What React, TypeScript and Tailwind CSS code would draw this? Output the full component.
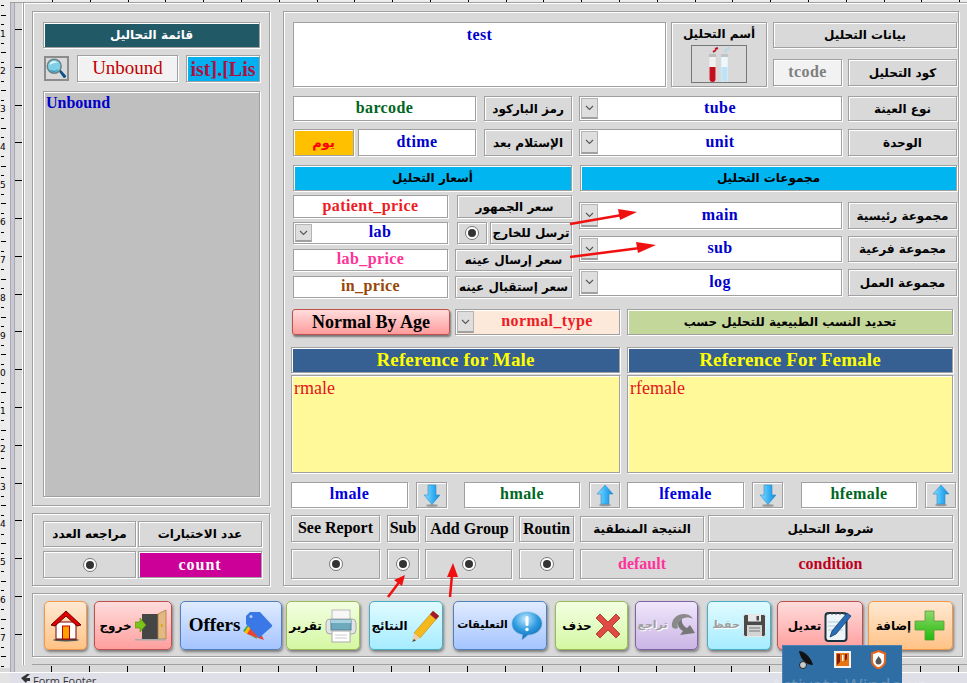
import type { ReactNode } from 'react';

const etched = 'border border-[#a0a0a0] shadow-[inset_1px_1px_0_#fff,1px_1px_0_#fff]';
const serif = "font-['Liberation_Serif',serif]";
const arabic = "font-['DejaVu_Sans',sans-serif]";
const greyed = 'text-[#a0a0a0] text-[11px] [text-shadow:1px_1px_0_#fff]';

function Label({ className = '', children }: { className?: string; children: ReactNode }) {
  return (
    <div dir="rtl" className={`${etched} ${arabic} shrink-0 flex items-center justify-center font-bold text-[12px] text-black whitespace-nowrap overflow-hidden ${className}`}>
      {children}
    </div>
  );
}

function Latin({ className = '', children }: { className?: string; children: ReactNode }) {
  return (
    <div className={`${etched} ${serif} shrink-0 flex items-center justify-center pb-px font-bold text-[16px] whitespace-nowrap overflow-hidden ${className}`}>
      {children}
    </div>
  );
}

function Field({ className = '', children }: { className?: string; children: ReactNode }) {
  return (
    <div className={`${etched} ${serif} shrink-0 flex items-center justify-center pb-[2px] bg-white font-bold text-[16px] tracking-[0.4px] whitespace-nowrap overflow-hidden ${className}`}>
      {children}
    </div>
  );
}

function Combo({ className = '', bg = 'bg-white', children }: { className?: string; bg?: string; children: ReactNode }) {
  return (
    <div className={`${etched} ${serif} ${bg} shrink-0 flex items-stretch font-bold text-[16px] tracking-[0.4px] whitespace-nowrap ${className}`}>
      <div className="w-[17px] m-[1px] shrink-0 bg-[#dedede] border border-[#b4b4b4] border-b-2 border-b-[#a0a0a0] flex items-center justify-center">
        <svg width="9" height="6" viewBox="0 0 9 6"><path d="M1 1l3.5 3.5L8 1" fill="none" stroke="#555" strokeWidth="1.1" /></svg>
      </div>
      <div className="flex-1 flex items-center justify-center pb-[2px]">{children}</div>
    </div>
  );
}

function Radio() {
  return (
    <div className="w-[14px] h-[14px] rounded-full bg-white border border-[#777] flex items-center justify-center">
      <div className="w-[8px] h-[8px] rounded-full bg-[#333]" />
    </div>
  );
}

function RadioCell({ className = '' }: { className?: string }) {
  return (
    <div className={`${etched} shrink-0 flex items-center justify-center ${className}`}>
      <Radio />
    </div>
  );
}

function ActionButton({ className, icon, children }: { className: string; icon?: ReactNode; children?: ReactNode }) {
  return (
    <div className={`shrink-0 h-[49px] rounded-[5px] border bg-linear-to-b shadow-[1px_2px_3px_rgba(0,0,0,0.45)] flex items-center justify-center gap-[3px] ${className}`}>
      {children}
      {icon}
    </div>
  );
}

function BlockArrow({ up = false }: { up?: boolean }) {
  return (
    <svg width="18" height="23" viewBox="0 0 18 23">
      <defs>
        <linearGradient id={up ? 'arrUp' : 'arrDown'} x1="0" x2="1" y1="0" y2="0">
          <stop offset="0" stopColor="#8fdcff" />
          <stop offset="0.55" stopColor="#37b2f5" />
          <stop offset="1" stopColor="#1b86d8" />
        </linearGradient>
      </defs>
      <ellipse cx="9" cy={up ? 21 : 21.5} rx="6" ry="1.3" fill="#999" />
      <path
        d={up ? 'M9 1L17 10H13V20H5V10H1Z' : 'M5 1H13V11H17L9 20.5L1 11H5Z'}
        fill={`url(#${up ? 'arrUp' : 'arrDown'})`}
        stroke="#2d8fcf"
        strokeWidth="0.6"
      />
    </svg>
  );
}

function ArrowCell({ up = false }: { up?: boolean }) {
  return (
    <div className={`${etched} w-[31px] h-[26px] shrink-0 flex items-center justify-center`}>
      <BlockArrow up={up} />
    </div>
  );
}

const Magnifier = () => (
  <svg width="23" height="23" viewBox="0 0 23 23">
    <path d="M14 14.5l2-1.5 6 6.5c.6 1-1.4 3-2.6 2.4z" fill="#0b4f8c" />
    <circle cx="9" cy="9" r="7.6" fill="#7fd0e6" stroke="#6a7f88" strokeWidth="1.6" />
    <path d="M4 8a5 5 0 0 1 5-4.5c2 0 3 1 3.6 2C10 4.6 6 5.5 4 8z" fill="#e9fbff" />
    <path d="M4 12c2 2 6 3 9.500 0-1 2.500-3.500 3.500-5 3.300-2-.2-3.800-1.500-4.500-3.300z" fill="#2a98bd" />
  </svg>
);

const Tubes = () => (
  <svg width="30" height="37" viewBox="0 0 30 37">
    <rect x="5" y="8" width="7" height="28" rx="2.5" fill="#f1f1f1" stroke="#d0d0d0" strokeWidth="0.5" />
    <rect x="5" y="8" width="7" height="3" fill="#bdbdbd" />
    <path d="M5.500 21H11.500V33a3 3 0 0 1-6 0z" fill="#c50f1f" />
    <rect x="17" y="8" width="7" height="28" rx="2.5" fill="#eef7fc" stroke="#d0dfe8" strokeWidth="0.5" />
    <rect x="17" y="8" width="7" height="3" fill="#c2c2c2" />
    <path d="M17.500 21H23.500V33a3 3 0 0 1-6 0z" fill="#bfe3f6" />
    <path d="M9 6l3-2M11 3l3-1" stroke="#c50f1f" strokeWidth="2" />
    <path d="M21 6l2-3M24 3l1-2" stroke="#a9d8ee" strokeWidth="2" />
  </svg>
);

const HomeIcon = () => (
  <svg width="32" height="34" viewBox="0 0 32 34">
    <ellipse cx="16" cy="31" rx="13" ry="1.500" fill="#555" />
    <rect x="6" y="13" width="20" height="17" fill="#fff" stroke="#7a0000" />
    <rect x="12.500" y="17" width="7" height="13" fill="#ffa200" stroke="#c00000" />
    <path d="M1 16L16 2L31 16L27 17L16 7L5 17Z" fill="#e30000" stroke="#600" strokeWidth="1" />
  </svg>
);

const ExitIcon = () => (
  <svg width="32" height="34" viewBox="0 0 32 34">
    <rect x="7" y="5" width="16" height="25" fill="#454545" />
    <path d="M23 5l8-4v29h-8z" fill="#e3b883" stroke="#a97b45" strokeWidth="0.8" />
    <rect x="26" y="15" width="1.500" height="3" fill="#d9a400" />
    <rect x="0" y="30" width="31" height="1.500" fill="#aaa" />
    <path d="M0 13h5V9l6 7-6 7v-4H0z" fill="#7cc41a" stroke="#4f8f07" strokeWidth="0.6" />
  </svg>
);

const TagIcon = () => (
  <svg width="30" height="31" viewBox="0 0 30 31">
    <path d="M0 21l8-11 6 19z" fill="#34a853" />
    <path d="M1 22l9-12 8 20z" fill="#fbbc05" transform="rotate(-4 9 20)" />
    <path d="M4 24l8-13 9 19z" fill="#ea4335" />
    <path d="M7 2h10l12 13c.5 1 0 1.500-.5 2L16 28 3 14V6z" fill="#3b78e7" />
    <circle cx="8" cy="6.500" r="1.500" fill="#b7d0f8" />
  </svg>
);

const PrinterIcon = () => (
  <svg width="32" height="34" viewBox="0 0 32 34">
    <rect x="7" y="1" width="18" height="11" fill="#f7f7f7" stroke="#bbb" />
    <rect x="1" y="10" width="30" height="15" rx="4" fill="#e4e4e4" stroke="#aaa" />
    <rect x="6" y="11" width="20" height="10" fill="#6ea9bd" stroke="#4f8497" />
    <rect x="6" y="11" width="20" height="3" fill="#a6d3df" />
    <rect x="7" y="22" width="18" height="11" fill="#fff" stroke="#aaa" />
    <path d="M10 26h12M10 29h12" stroke="#ccc" />
  </svg>
);

const PencilIcon = () => (
  <svg width="30" height="34" viewBox="0 0 30 34">
    <path d="M22 2l6 5L9 29 3 24z" fill="#f6b91d" stroke="#b9860b" strokeWidth="0.6" />
    <path d="M22 2l6 5-3 3.500-6-5z" fill="#9e1b2c" />
    <path d="M3 24l6 5-8 4z" fill="#edcfa8" />
    <path d="M1 33l2-3 2 1.500z" fill="#444" />
  </svg>
);

const ChatIcon = () => (
  <svg width="32" height="30" viewBox="0 0 32 30">
    <defs>
      <radialGradient id="chatFill" cx="0.45" cy="0.25" r="0.8">
        <stop offset="0" stopColor="#bfe8ff" />
        <stop offset="0.5" stopColor="#2e9be0" />
        <stop offset="1" stopColor="#0c5fa8" />
      </radialGradient>
    </defs>
    <path d="M16 1c8.500 0 15 5 15 11.500S24.500 24 17 24l-6 5 .5-5.500C5 22.500 1 18 1 12.500 1 6 7.500 1 16 1z" fill="url(#chatFill)" stroke="#7ab7de" strokeWidth="0.6" />
    <rect x="14.500" y="5" width="3" height="10" rx="1.500" fill="#fff" />
    <circle cx="16" cy="18.500" r="1.700" fill="#fff" />
  </svg>
);

const CrossIcon = () => (
  <svg width="26" height="26" viewBox="0 0 26 26">
    <path d="M5 1l8 8 8-8 4 4-8 8 8 8-4 4-8-8-8 8-4-4 8-8-8-8z" fill="#df4b42" stroke="#a02c27" strokeWidth="0.8" />
  </svg>
);

const UndoIcon = () => (
  <svg width="25" height="25" viewBox="0 0 25 25">
    <path d="M24 20L9 22l3-4C9 16.500 7 14 7 11c0-2 1-4 4-5-1 5 3 8 5 9l3-3z" fill="#777" />
    <path d="M1 14C0 7 5 1 13 1c5 0 8 3 9 5-3-2-8-2-11 0-4 2-5 5-4 9-2 1-4 1-6-1z" fill="#8a8a8a" />
  </svg>
);

const SaveIcon = () => (
  <svg width="23" height="23" viewBox="0 0 23 23">
    <rect x="0.500" y="0.500" width="22" height="22" rx="2" fill="#4a4a4a" stroke="#e6e6e6" />
    <rect x="5" y="1" width="13" height="6.500" fill="#e8e8e8" />
    <rect x="13.500" y="2" width="2.500" height="4.500" fill="#4a4a4a" />
    <rect x="4" y="11" width="15" height="11" fill="#d4d4d4" />
    <path d="M6 14h11M6 17h11" stroke="#777" />
  </svg>
);

const NotepadIcon = () => (
  <svg width="28" height="32" viewBox="0 0 28 32">
    <rect x="1.500" y="3" width="21" height="28" rx="3" fill="#eef5f9" stroke="#18313f" strokeWidth="2" />
    <path d="M4 2v3M8 2v3M12 2v3M16 2v3M20 2v3" stroke="#555" />
    <path d="M4 12h15M4 16h15M4 20h15" stroke="#b5cbd6" />
    <path d="M23 3l4 3L12 24l-6 3 2-6z" fill="#2a6cb5" stroke="#123e6f" strokeWidth="0.8" />
  </svg>
);

const PlusIcon = () => (
  <svg width="31" height="31" viewBox="0 0 31 31">
    <defs>
      <linearGradient id="plusFill" x1="0" x2="0" y1="0" y2="1">
        <stop offset="0" stopColor="#8fd76b" />
        <stop offset="1" stopColor="#22bb0c" />
      </linearGradient>
    </defs>
    <path d="M11 1h9v10h10v9H20v10h-9V20H1v-9h10z" fill="url(#plusFill)" stroke="#5a9a3f" strokeWidth="0.8" />
  </svg>
);

function TopTicks({ className }: { className: string }) {
  return (
    <div className={`flex pl-[28px] ${className}`}>
      {Array.from({ length: 25 }).map((_, i) => (
        <div key={i} className="w-[37.8px] shrink-0 border-l border-l-black" />
      ))}
    </div>
  );
}

function VerticalRuler() {
  return (
    <div className="w-[10px] h-[669px] bg-[#ececec] pt-[2px] overflow-hidden shrink-0 -mt-[4px]">
      {Array.from({ length: 71 }).map((_, i) => (
        <div key={i} className="h-[9.450px] flex items-center">
          {i % 4 === 3 ? (
            <span className="font-['DejaVu_Sans',sans-serif] text-[9px] leading-none text-black">{((i + 1) / 4) % 10}</span>
          ) : (
            <div className={`h-px bg-black ml-px ${i % 4 === 1 ? 'w-[5px]' : 'w-[3px]'}`} />
          )}
        </div>
      ))}
    </div>
  );
}

export default function App() {
  return (
    <div className="relative w-[967px] h-[683px] overflow-hidden bg-[#d9d9d9]">
      {/* top ruler */}
      <div className="h-[3px] bg-[#ececec] border-b border-[#a0a0a0]">
        <TopTicks className="h-[2px] ml-[24px]" />
      </div>

      <div className="flex h-[669px]">
        {/* left ruler */}
        <div className="w-[23px] shrink-0 flex">
          <VerticalRuler />
          <div className="w-[5px] shrink-0 bg-[#c9c9d6] border-x border-x-[#a8a8b0]" />
          <div className="flex-1 flex flex-col pt-[26px] gap-[36.800px]">
            {Array.from({ length: 17 }).map((_, i) => (
              <div key={i} className="h-px bg-black" />
            ))}
          </div>
        </div>

        <div className="flex-1 min-w-0 flex flex-col">
          <div className="flex-1 border-l border-[#a0a0a0] shadow-[-1px_0_0_#fff,inset_1px_1px_0_#fff] pt-[8px] pl-[8px]">
            <div className="flex gap-[13px] h-[575px]">
              {/* left column */}
              <div className="w-[238px] shrink-0 flex flex-col gap-[7px]">
                <div className={`${etched} h-[495px] pl-[10px] pt-[10px]`}>
                  <div className={`${etched} ${arabic} w-[217px] h-[26px] bg-[#215967] text-white font-bold text-[12px] flex items-center justify-center`} dir="rtl">
                    قائمة التحاليل
                  </div>
                  <div className="flex gap-[8px] mt-[7px] h-[27px] w-[217px]">
                    <div className="w-[25px] h-[25px] ml-px mt-px shrink-0 border-2 border-[#8c8c8c] flex items-center justify-center overflow-hidden">
                      <Magnifier />
                    </div>
                    <div className={`${etched} ${serif} w-[101px] shrink-0 bg-[#f2f2f2] text-[#c00000] text-[19px] flex items-center justify-center`}>Unbound</div>
                    <div className={`${etched} ${serif} w-[74px] shrink-0 bg-[#00b0f0] text-[#b01040] font-bold text-[20px] flex items-center justify-center overflow-hidden whitespace-nowrap`}>ist].[Lis</div>
                  </div>
                  <div className={`${etched} ${serif} mt-[9px] w-[217px] h-[406px] bg-[#bfbfbf] text-[#0000cc] font-bold text-[16px] leading-none pl-[2px] pt-[3px]`}>
                    Unbound
                  </div>
                </div>
                <div className={`${etched} h-[73px] pl-[10px] pt-[7px]`}>
                  <div className="flex gap-[2px] h-[26px]">
                    <Label className="w-[93px]">مراجعه العدد</Label>
                    <Label className="w-[124px]">عدد الاختبارات</Label>
                  </div>
                  <div className="flex gap-[2px] h-[27px] mt-[4px]">
                    <RadioCell className="w-[93px]" />
                    <div className={`${etched} ${serif} w-[124px] bg-[#cc0099] text-white font-bold text-[16px] tracking-[1px] flex items-center justify-center`}>count</div>
                  </div>
                </div>
              </div>

              {/* main panel */}
              <div className={`${etched} w-[676px] shrink-0 pl-[7px] pt-[10px]`}>
                <div className="ml-[2px]">
                  <div className="flex h-[65px]">
                    <Field className="w-[373px] h-[65px] !items-start text-[#0000cc]">test</Field>
                    <div className={`${etched} ml-[5px] w-[96px] shrink-0 flex flex-col items-center pt-[2px]`}>
                      <div dir="rtl" className={`${arabic} font-bold text-[12px] leading-[18px] text-black`}>أسم التحليل</div>
                      <div className="mt-[2px] w-[56px] h-[38px] border border-[#777] flex items-center justify-center overflow-hidden">
                        <Tubes />
                      </div>
                    </div>
                    <div className="ml-[6px] w-[184px] shrink-0 flex flex-col">
                      <Label className="h-[26px] w-[184px]">بيانات التحليل</Label>
                      <div className="flex gap-[6px] mt-[11px] h-[27px]">
                        <Field className="w-[69px] !bg-[#f2f2f2] text-[#7f7f7f]">tcode</Field>
                        <Label className="w-[109px]">كود التحليل</Label>
                      </div>
                    </div>
                  </div>

                  <div className="flex h-[25px] mt-[9px]">
                    <Field className="w-[183px] text-[#006622]">barcode</Field>
                    <Label className="ml-[8px] w-[88px]">رمز الباركود</Label>
                    <Combo className="ml-[7px] w-[263px] text-[#0000cc]">tube</Combo>
                    <Label className="ml-[6px] w-[109px]">نوع العينة</Label>
                  </div>

                  <div className="flex h-[27px] mt-[8px]">
                    <div dir="rtl" className={`${etched} ${arabic} w-[61px] shrink-0 bg-[#ffc000] text-[#ff0000] font-bold text-[13px] flex items-center justify-center`}>يوم</div>
                    <Field className="ml-[4px] w-[118px] text-[#0000cc]">dtime</Field>
                    <Label className="ml-[8px] w-[88px]">الإستلام بعد</Label>
                    <Combo className="ml-[7px] w-[263px] text-[#0000cc]">unit</Combo>
                    <Label className="ml-[6px] w-[109px]">الوحدة</Label>
                  </div>

                  <div className="flex h-[26px] mt-[9px]">
                    <Label className="w-[279px] !bg-[#00b5f0]">أسعار التحليل</Label>
                    <Label className="ml-[8px] w-[377px] !bg-[#00b5f0]">مجموعات التحليل</Label>
                  </div>

                  <div className="flex mt-[4px] h-[103px]">
                    <div className="w-[279px] shrink-0 flex flex-col">
                      <div className="flex h-[23px]">
                        <Field className="w-[155px] text-[#ee1c25]">patient_price</Field>
                        <Label className="ml-[9px] w-[115px]">سعر الجمهور</Label>
                      </div>
                      <div className="flex h-[22px] mt-[4px]">
                        <Combo className="w-[155px] text-[#0000cc]">lab</Combo>
                        <RadioCell className="ml-[9px] w-[30px]" />
                        <Label className="ml-[3px] w-[82px]">ترسل للخارج</Label>
                      </div>
                      <div className="flex h-[22px] mt-[5px]">
                        <Field className="w-[155px] text-[#ff3399]">lab_price</Field>
                        <Label className="ml-[7px] w-[117px]">سعر إرسال عينه</Label>
                      </div>
                      <div className="flex h-[22px] mt-[5px]">
                        <Field className="w-[155px] text-[#974706]">in_price</Field>
                        <Label className="ml-[7px] w-[117px]">سعر إستقبال عينه</Label>
                      </div>
                    </div>
                    <div className="ml-[7px] w-[378px] shrink-0 flex flex-col pt-[7px]">
                      <div className="flex h-[27px]">
                        <Combo className="w-[263px] text-[#0000cc]">main</Combo>
                        <Label className="ml-[6px] w-[109px]">مجموعة رئيسية</Label>
                      </div>
                      <div className="flex h-[26px] mt-[7px]">
                        <Combo className="w-[263px] text-[#0000cc]">sub</Combo>
                        <Label className="ml-[6px] w-[109px]">مجموعة فرعية</Label>
                      </div>
                      <div className="flex h-[27px] mt-[7px]">
                        <Combo className="w-[263px] text-[#0000cc]">log</Combo>
                        <Label className="ml-[6px] w-[109px]">مجموعة العمل</Label>
                      </div>
                    </div>
                  </div>
                </div>

                <div className="flex h-[26px] mt-[11px] ml-px">
                  <div className={`${serif} w-[158px] shrink-0 rounded-[3px] border border-[#c0504d] bg-linear-to-b from-[#ffdcdc] to-[#ff9c9c] shadow-[1px_2px_2px_rgba(0,0,0,0.45)] text-black font-bold text-[18px] flex items-center justify-center`}>Normal By Age</div>
                  <Combo bg="bg-[#fde9d9]" className="ml-[5px] w-[165px] text-[#ee1c25]">normal_type</Combo>
                  <Label className="ml-[7px] w-[326px] !bg-[#c4d79b]">تحديد النسب الطبيعية للتحليل حسب</Label>
                </div>

                <div className="flex gap-[7px] mt-[12px]">
                  <div className="w-[329px] shrink-0 flex flex-col gap-[2px]">
                    <div className={`${etched} ${serif} h-[26px] bg-[#366092] text-[#ffff00] font-bold text-[19px] tracking-[0.15px] flex items-center justify-center`}>Reference for Male</div>
                    <div className={`${etched} ${serif} h-[98px] bg-[#fff999] text-[#e0141c] text-[18px] leading-none pl-[2px] pt-[3px]`}>rmale</div>
                  </div>
                  <div className="w-[326px] shrink-0 flex flex-col gap-[2px]">
                    <div className={`${etched} ${serif} h-[26px] bg-[#366092] text-[#ffff00] font-bold text-[19px] tracking-[0.15px] flex items-center justify-center`}>Reference For Female</div>
                    <div className={`${etched} ${serif} h-[98px] bg-[#fff999] text-[#e0141c] text-[18px] leading-none pl-[2px] pt-[3px]`}>rfemale</div>
                  </div>
                </div>

                <div className="flex h-[26px] mt-[9px]">
                  <Field className="w-[117px] text-[#0000e0]">lmale</Field>
                  <div className="ml-[8px]"><ArrowCell /></div>
                  <Field className="ml-[17px] w-[116px] text-[#006622]">hmale</Field>
                  <div className="ml-[9px]"><ArrowCell up /></div>
                  <Field className="ml-[7px] w-[117px] text-[#0000e0]">lfemale</Field>
                  <div className="ml-[8px]"><ArrowCell /></div>
                  <Field className="ml-[18px] w-[116px] text-[#006622]">hfemale</Field>
                  <div className="ml-[8px]"><ArrowCell up /></div>
                </div>

                <div className="flex h-[27px] mt-[7px]">
                  <Latin className="w-[89px] text-black">See Report</Latin>
                  <Latin className="ml-[7px] w-[32px] text-black">Sub</Latin>
                  <Latin className="ml-[6px] w-[89px] mt-px text-black">Add Group</Latin>
                  <Latin className="ml-[5px] w-[55px] mt-px text-black">Routin</Latin>
                  <Label className="ml-[6px] w-[124px] mt-px">النتيجة المنطقية</Label>
                  <Label className="ml-[4px] w-[245px]">شروط التحليل</Label>
                </div>

                <div className="flex h-[30px] mt-[7px]">
                  <RadioCell className="w-[89px]" />
                  <RadioCell className="ml-[7px] w-[32px]" />
                  <RadioCell className="ml-[6px] w-[87px]" />
                  <RadioCell className="ml-[7px] w-[55px]" />
                  <Latin className="ml-[6px] w-[124px] text-[#ff3399]">default</Latin>
                  <Latin className="ml-[4px] w-[245px] text-[#c00020]">condition</Latin>
                </div>
              </div>
            </div>

            {/* action buttons */}
            <div className={`${etched} w-[931px] h-[64px] mt-[7px] pl-[11px] pt-[7px] flex ${arabic} font-bold text-[12px] text-black`}>
              <ActionButton className="w-[43px] border-[#f79646] from-[#ffe9d2] to-[#ffc285]" icon={<HomeIcon />} />
              <ActionButton className="ml-[7px] w-[78px] border-[#c0504d] from-[#ffdcdc] to-[#ff9e9e]" icon={<ExitIcon />}><span dir="rtl">خروج</span></ActionButton>
              <ActionButton className="ml-[8px] w-[102px] border-[#4f81bd] from-[#e0ebff] to-[#a5c4ff]" icon={<TagIcon />}><span className={`${serif} text-[19px]`}>Offers</span></ActionButton>
              <ActionButton className="ml-[4px] w-[74px] border-[#9bbb59] from-[#f3ffe2] to-[#d5f7a2]" icon={<PrinterIcon />}><span dir="rtl">تقرير</span></ActionButton>
              <ActionButton className="ml-[9px] w-[74px] border-[#4bacc6] from-[#e0fbff] to-[#a5ecff]" icon={<PencilIcon />}><span dir="rtl">النتائج</span></ActionButton>
              <ActionButton className="ml-[10px] w-[94px] border-[#4f81bd] from-[#e0ebff] to-[#a5c4ff]" icon={<ChatIcon />}><span dir="rtl" className="text-[11px]">التعليقات</span></ActionButton>
              <ActionButton className="ml-[8px] w-[73px] border-[#9bbb59] from-[#f3ffe2] to-[#d5f7a2]" icon={<CrossIcon />}><span dir="rtl">حذف</span></ActionButton>
              <ActionButton className="ml-[7px] w-[63px] border-[#8064a2] from-[#efe7fb] to-[#cbb5e5]" icon={<UndoIcon />}><span dir="rtl" className={greyed}>تراجع</span></ActionButton>
              <ActionButton className="ml-[9px] w-[64px] border-[#4bacc6] from-[#e0fbff] to-[#a5ecff]" icon={<SaveIcon />}><span dir="rtl" className={greyed}>حفظ</span></ActionButton>
              <ActionButton className="ml-[6px] w-[86px] border-[#c0504d] from-[#ffdcdc] to-[#ff9e9e]" icon={<NotepadIcon />}><span dir="rtl">تعديل</span></ActionButton>
              <ActionButton className="ml-[5px] w-[85px] border-[#f79646] from-[#ffe9d2] to-[#ffc285]" icon={<PlusIcon />}><span dir="rtl">إضافة</span></ActionButton>
            </div>
            <div className="mt-[7px] border-t border-[#a0a0a0]" />
          </div>
          <TopTicks className="h-[7px] pt-px" />
        </div>
      </div>

      {/* section bar */}
      <div className="h-[11px] flex bg-[#dfdfe8] border-t border-white overflow-hidden">
        <div className="w-[10px] bg-[#e3e3e3] shrink-0" />
        <div className="ml-[10px] w-[10px] shrink-0 flex items-center justify-center">
          <svg width="10" height="9" viewBox="0 0 10 9"><path d="M1 4l6-4h3L6 4h4v3H7l-1 2z" fill="#333" /></svg>
        </div>
        <div className="ml-[3px] font-['Open_Sans',sans-serif] text-[11px] leading-[13px] pt-px text-[#333]">Form Footer</div>
      </div>

      {/* red arrows drawn over the form */}
      <svg className="absolute left-0 top-0 pointer-events-none" width="967" height="683" viewBox="0 0 967 683">
        <g stroke="#f01010" strokeWidth="2.500" fill="#f01010">
          <line x1="570" y1="224" x2="622" y2="215" />
          <line x1="570" y1="257" x2="640" y2="248" />
          <line x1="388" y1="597" x2="400" y2="581" />
          <line x1="450" y1="597" x2="452" y2="575" />
        </g>
        <g fill="#f01010">
          <polygon points="637,212 618,209 620,220" />
          <polygon points="656,245 636,242 638,253" />
          <polygon points="405,575 394,580 402,586" />
          <polygon points="453,563 447,577 458,577" />
        </g>
      </svg>

      {/* taskbar popup */}
      <div className="absolute left-[782px] top-[645px] w-[120px] h-[38px] bg-[#2f6ea5] border-t border-l border-[#4d83b0] flex justify-between pl-[13px] pr-[16px] pt-[4px]">
        <svg width="18" height="20" viewBox="0 0 18 20">
          <path d="M3 1c5 0 12 6 14 14-6 0-12-4-14-14z" fill="#111" />
          <circle cx="7" cy="15" r="3.500" fill="#ccc" stroke="#222" />
        </svg>
        <svg width="17" height="17" viewBox="0 0 17 17" className="mt-px">
          <rect width="17" height="17" fill="#f4f4f4" />
          <rect x="2" y="2" width="13" height="13" fill="#e87412" />
          <path d="M3 3h3v8l-3 3zM11 3h2v5l-2 2z" fill="#7c1f10" />
          <rect x="8" y="4" width="1.500" height="6" fill="#fff" />
        </svg>
        <svg width="15" height="19" viewBox="0 0 15 19">
          <path d="M7.500 1l6.500 2.500v7c0 4-3 6.500-6.500 8C4 17 1 14.500 1 10.500v-7z" fill="#fff" stroke="#e8661c" strokeWidth="2" />
          <path d="M7.500 6c1 2 3 3 3 5.500a3 3 0 0 1-6 0C4.500 9.500 6.500 8.500 7.500 6z" fill="#555" />
        </svg>
      </div>
      <div className="absolute left-[770px] top-[676px] font-['Open_Sans',sans-serif] text-[19px] leading-none text-white/25 whitespace-nowrap">Activate Windows</div>
    </div>
  );
}
